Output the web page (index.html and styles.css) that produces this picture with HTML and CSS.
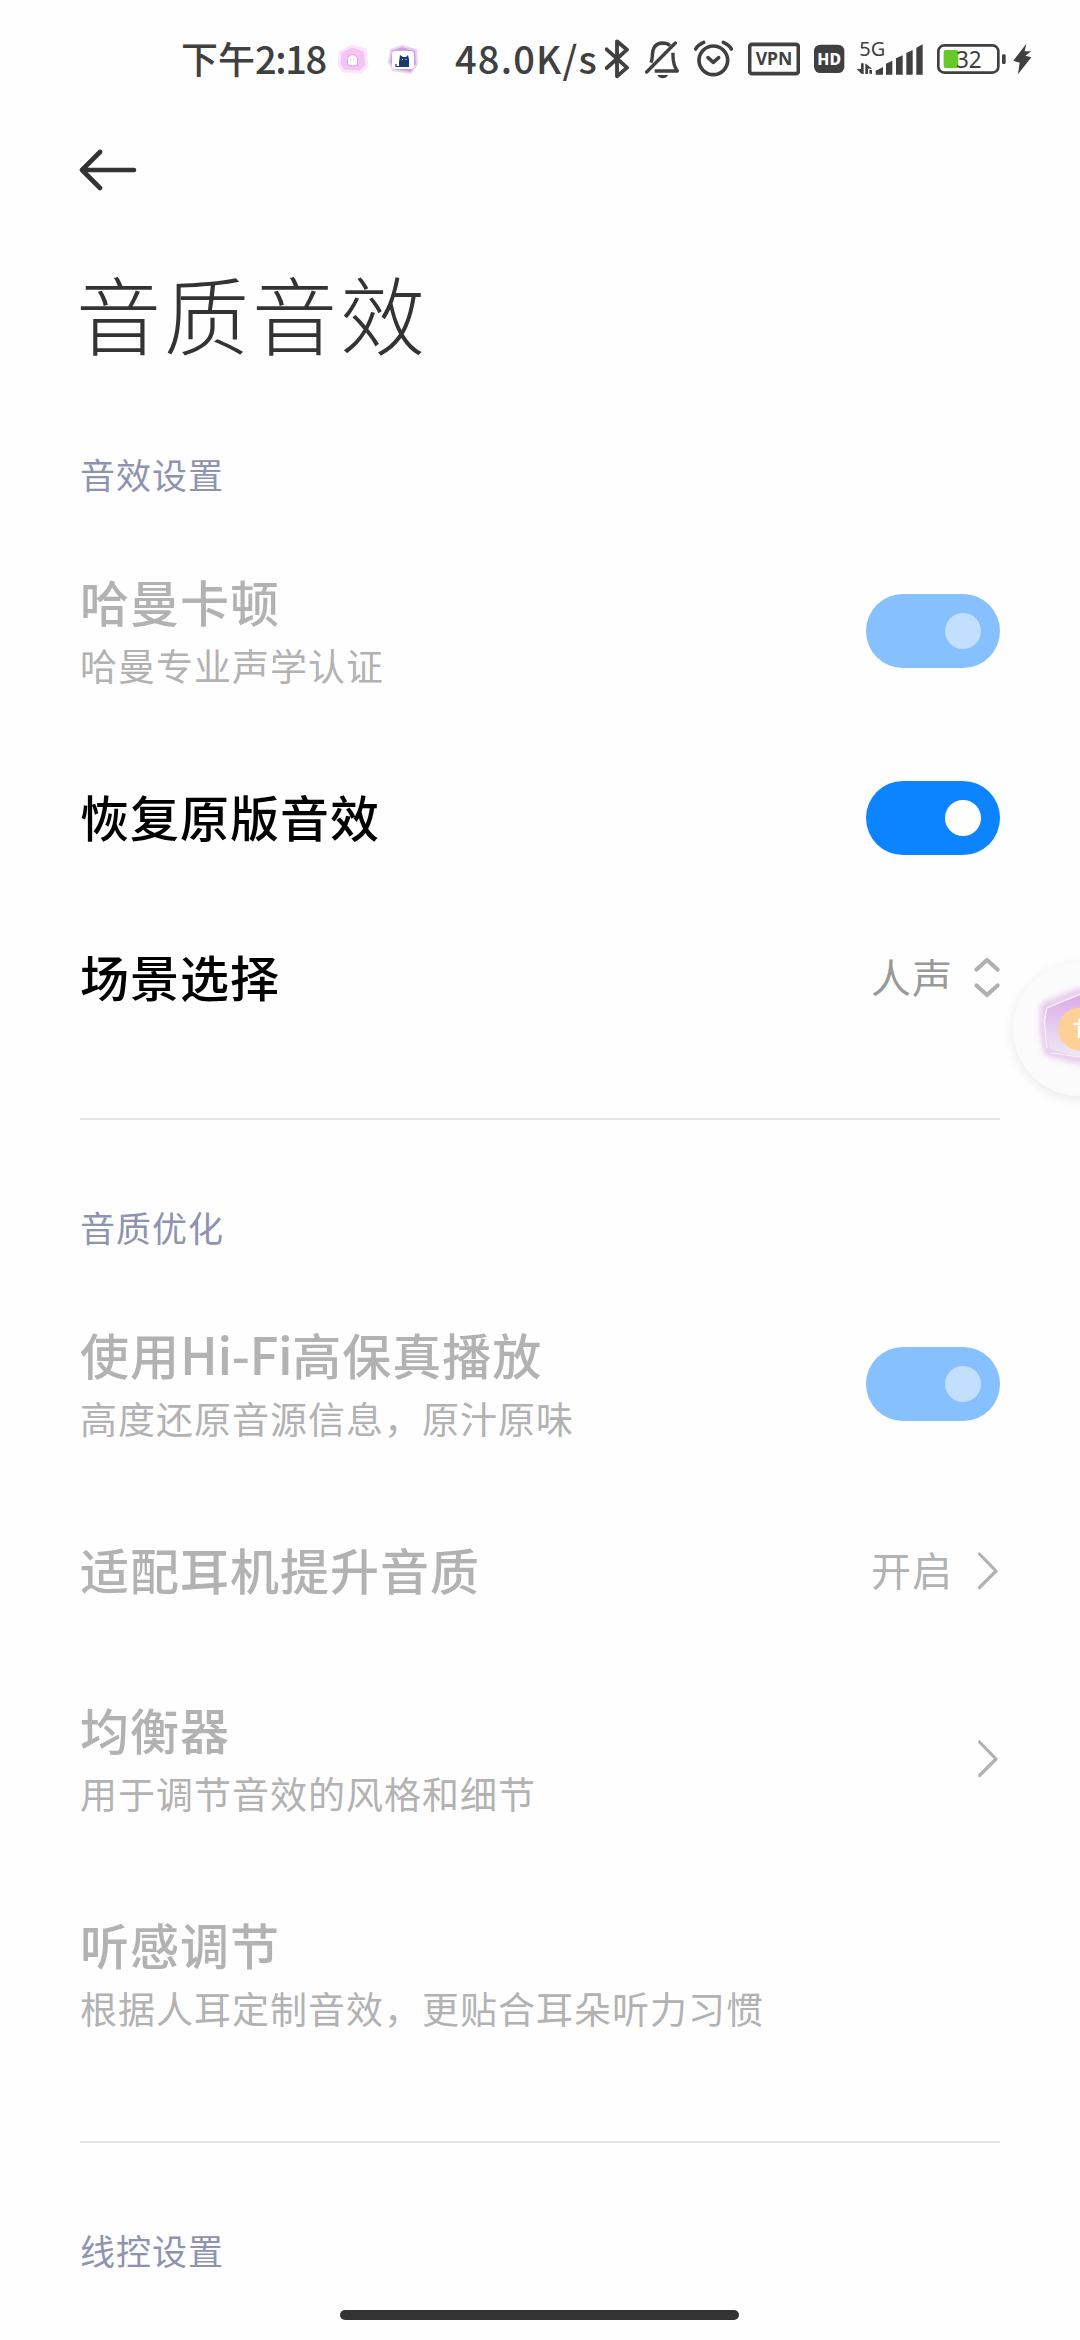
FILE: index.html
```html
<!DOCTYPE html>
<html lang="zh-CN">
<head>
<meta charset="utf-8">
<title>音质音效</title>
<link rel="stylesheet" href="styles.css">
</head>
<body>
<div class="screen">
  <header class="status">
    <span class="clock">下午<span class="digits">2:18</span></span>
    <svg class="app-a" width="36" height="36" viewBox="0 0 36 36"><path d="M5 10 L17 4 L30 8 L32 24 L25 30 L8 29 L4 22Z" fill="#f6c3f5" stroke="#fce6fc" stroke-width="3" stroke-linejoin="round"/><path d="M12.500 23V17.500a5 5 0 0 1 10 0V23q-5 2-10 0Z" fill="#fff" stroke="#dd9fe0" stroke-width="1"/><path d="M15.500 17v1.500M19 17v1.500" stroke="#dd9fe0" stroke-width="1"/></svg>
    <svg class="app-b" width="36" height="36" viewBox="0 0 36 36"><path d="M6 8 L17 4 L31 8 L32 22 L26 31 L8 28 L4 20Z" fill="#cfa3e2" stroke="#ecd3f5" stroke-width="2" stroke-linejoin="round"/><rect x="7" y="9" width="22" height="18" rx="3" fill="#fff"/><path d="M14 25V20L15 13l3 2h3l2-2 1 4v8Z" fill="#1d3c6e"/><path d="M11 22v2.500h3" fill="none" stroke="#1d3c6e" stroke-width="1.200"/><path d="M17 17.500h1M20.500 17.500h1" stroke="#fff" stroke-width="1"/></svg>
    <span class="speed">48.0K/s</span>
    <svg class="bt" width="25" height="48" viewBox="45 48 75 144"><path d="M50 88 L111 143 L81 169 V64 L111 89 L50 144" fill="none" stroke="#404040" stroke-width="11.500" stroke-linecap="round" stroke-linejoin="round"/></svg>
    <svg class="bell" width="36" height="48" viewBox="165 48 108 144"><g fill="none" stroke="#404040" stroke-width="10"><path d="M183 128 Q187 118 187 108 Q187 70 218 69 Q232 69 240 77"/><path d="M249 98 V108 Q249 134 262 153 H194" stroke-linejoin="round"/><path d="M170 156 L256 69" stroke-linecap="round"/></g><path d="M202 165H234Q229 175 218 175Q207 175 202 165Z" fill="#404040"/></svg>
    <svg class="alarm" width="41" height="48" viewBox="309 48 123 144"><g fill="none" stroke="#404040" stroke-width="11" stroke-linecap="round"><circle cx="370" cy="121" r="43"/><path d="M354 113 L370 127 L386 113" stroke-linejoin="round"/><path d="M317 87 Q324 74 341 67 M400 67 Q417 74 424 87"/></g></svg>
    <svg class="vpn" width="52" height="48" viewBox="474 48 156 144"><rect x="479" y="73" width="146" height="88" rx="7" fill="none" stroke="#404040" stroke-width="11"/><text x="497" y="136" textLength="110" lengthAdjust="spacingAndGlyphs" font-size="54" font-weight="700" class="ic">VPN</text></svg>
    <svg class="hd" width="31" height="48" viewBox="672 48 93 144"><rect x="672" y="74" width="91" height="85" rx="19" fill="#404040"/><text x="682" y="134" textLength="71" lengthAdjust="spacingAndGlyphs" font-size="48" font-weight="800" class="ic neg">HD</text></svg>
    <svg class="sig" width="68" height="58" viewBox="798 33 204 174"><text x="808" y="107" textLength="78" lengthAdjust="spacingAndGlyphs" font-size="61" class="ic">5G</text><g fill="#404040"><path d="M857 164V152L879 141V164Z M888 164V131L907 122V164Z M918 164V115L938 106V164Z M949 164V99L968 90V164Z M979 164V83L998 73V164Z"/><path d="M813 130h8v32h-6L800 147h13Z M826 162V130L846 146h-12v16Z M838 150h8v11h-8Z"/></g></svg>
    <svg class="bat" width="69" height="48" viewBox="1041 48 207 144"><rect x="1045" y="76" width="180" height="82" rx="18" fill="none" stroke="#404040" stroke-width="8"/><rect x="1061" y="90" width="44" height="54" rx="7" fill="#65ca26"/><rect x="1236" y="103" width="11" height="29" rx="4" fill="#404040"/><text x="1098" y="143" textLength="77" lengthAdjust="spacingAndGlyphs" font-size="70" class="ic">32</text></svg>
    <svg class="bolt" width="20" height="48" viewBox="1266 48 60 144"><path d="M1309 71L1270 122L1289 128L1284 163L1324 112L1306 107L1324 94H1304Z" fill="#404040"/></svg>
  </header>

  <nav class="nav"><svg width="60" height="42" viewBox="0 0 60 42"><path d="M21 3L3 21L21 39M3 21H55" fill="none" stroke="#333" stroke-width="4.600" stroke-linecap="round" stroke-linejoin="round"/></svg></nav>
  <h1 class="title">音质音效</h1>

  <section class="group">
    <h2 class="label">音效设置</h2>
    <div class="row tall off"><div class="text"><p class="name">哈曼卡顿</p><p class="sub">哈曼专业声学认证</p></div><span class="switch"><i class="knob"></i></span></div>
    <div class="row"><p class="name">恢复原版音效</p><span class="switch"><i class="knob"></i></span></div>
    <div class="row"><p class="name">场景选择</p><span class="value">人声</span><svg width="26" height="42" viewBox="0 0 26 42"><path d="M2.500 12.500L13 3L23.500 12.500M2.500 28.500L13 38L23.500 28.500" fill="none" stroke="#b0b0b0" stroke-width="4.200" stroke-linecap="round" stroke-linejoin="round"/></svg></div>
  </section>

  <section class="group">
    <h2 class="label">音质优化</h2>
    <div class="row tall off"><div class="text"><p class="name">使用<span class="latin">Hi-Fi</span>高保真播放</p><p class="sub">高度还原音源信息，原汁原味</p></div><span class="switch"><i class="knob"></i></span></div>
    <div class="row off"><p class="name">适配耳机提升音质</p><span class="value">开启</span><svg class="chev" width="26" height="42" viewBox="0 0 26 42"><path d="M5.500 4L22 21L5.500 37.500" fill="none" stroke="#b2b2b2" stroke-width="3.200" stroke-linecap="round" stroke-linejoin="round"/></svg></div>
    <div class="row tall off"><div class="text"><p class="name">均衡器</p><p class="sub">用于调节音效的风格和细节</p></div><svg class="chev" width="26" height="42" viewBox="0 0 26 42"><path d="M5.500 4L22 21L5.500 37.500" fill="none" stroke="#b2b2b2" stroke-width="3.200" stroke-linecap="round" stroke-linejoin="round"/></svg></div>
    <div class="row tall off"><div class="text"><p class="name">听感调节</p><p class="sub">根据人耳定制音效，更贴合耳朵听力习惯</p></div></div>
  </section>

  <section class="group">
    <h2 class="label">线控设置</h2>
  </section>

  <div class="bubble"><svg width="134" height="134" viewBox="0 0 134 134"><defs><linearGradient id="gem" x1="0" y1="0" x2="0" y2="1"><stop offset="0" stop-color="#dcabe6"/><stop offset="1" stop-color="#eeeaf4"/></linearGradient><filter id="soft" x="-20%" y="-20%" width="140%" height="140%"><feGaussianBlur stdDeviation="3"/></filter></defs><path d="M32 44L67 30L105 43V88L67 98L35 90L31 66Z" fill="none" stroke="#e3bfea" stroke-width="7" filter="url(#soft)"/><path d="M34 46L67 33L101 46V85L67 95L36 86L33 60Z" fill="url(#gem)"/><path d="M34 86L31 58L34 46L67 32M38 91L67 95" fill="none" stroke="#faf2fc" stroke-width="1.200"/><circle cx="67" cy="67" r="21.500" fill="#ffd096"/><path d="M60 62H74M66 64V76M69 64V76" stroke="#fff" stroke-width="2.500" fill="none"/><circle cx="67" cy="58.500" r="2" fill="#fff"/></svg></div>
  <div class="home"></div>
</div>
</body>
</html>
```
FILE: styles.css
```css
* { box-sizing: border-box; margin: 0; padding: 0; }
body { background: #fefefe; }
.screen {
  position: relative;
  width: 1080px;
  height: 2340px;
  overflow: hidden;
  background: #fefefe;
  font-family: "Noto Sans CJK SC", sans-serif;
  color: #000;
}
.screen svg { display: block; flex: none; }
.status {
  height: 120px;
  padding: 0 48px 0 181px;
  display: flex;
  align-items: center;
  color: #404040;
  white-space: nowrap;
}
.clock, .speed { line-height: 48px; padding-bottom: 5px; font-weight: 500; flex: none; }
.clock { width: 154px; font-size: 37px; }
.digits { font-size: 38px; letter-spacing: -1.400px; }
.speed { width: 150px; margin-left: 34px; font-size: 38px; letter-spacing: 1.200px; }
.app-b { margin-left: 14px; }
.bell { margin-left: 15px; }
.alarm { margin-left: 12px; }
.vpn, .hd { margin-left: 14px; }
.sig { margin-left: 11px; }
.bat { margin-left: 13px; }
.bolt { margin-left: 6px; }
.ic { font-family: "Noto Sans", sans-serif; fill: #404040; }
.neg { fill: #fff; }
.nav { height: 100px; padding: 29px 0 0 79px; }
.title {
  height: 207px;
  padding: 30px 0 0 76px;
  font-size: 85px;
  line-height: 124px;
  font-weight: 300;
  letter-spacing: 3px;
  color: #333;
}
.group { margin: 0 80px; }
.group + .group { border-top: 2px solid #e4e4e4; margin-top: 60px; padding-top: 60px; }
.label {
  height: 96px;
  line-height: 94px;
  font-size: 35px;
  font-weight: 400;
  letter-spacing: 1px;
  color: #8d93b0;
}
.row { height: 160px; display: flex; align-items: center; }
.row.tall { height: 215px; }
.text { display: flex; flex-direction: column; margin-right: auto; }
.name { font-size: 49px; line-height: 66px; font-weight: 500; letter-spacing: 1px; }
.row > .name { margin-right: auto; padding-bottom: 5px; }
.latin { font-size: 51px; line-height: 1; letter-spacing: -.4px; }
.sub { padding-top: 3px; font-size: 37px; line-height: 56px; letter-spacing: 1px; }
.off { color: #b2b2b2; }
.value { font-size: 40px; line-height: 60px; padding-bottom: 4px; letter-spacing: 1px; color: #999; margin-right: 21px; }
.off .value { color: #b2b2b2; }
.switch {
  width: 134px;
  height: 74px;
  border-radius: 37px;
  background: #0d84ff;
  display: flex;
  align-items: center;
  justify-content: flex-end;
  padding-right: 19px;
}
.knob { width: 36px; height: 36px; border-radius: 50%; background: #fff; }
.off .switch { background: #87c0ff; }
.off .knob { background: #c2dfff; }
.bubble {
  position: absolute;
  left: 1013px;
  top: 962px;
  width: 134px;
  height: 134px;
  border-radius: 50%;
  background: #fbfbfb;
  box-shadow: 0 3px 12px rgba(0, 0, 0, .09);
}
.home {
  position: absolute;
  left: 340px;
  top: 2310px;
  width: 399px;
  height: 10px;
  border-radius: 5px;
  background: #333;
}
```
